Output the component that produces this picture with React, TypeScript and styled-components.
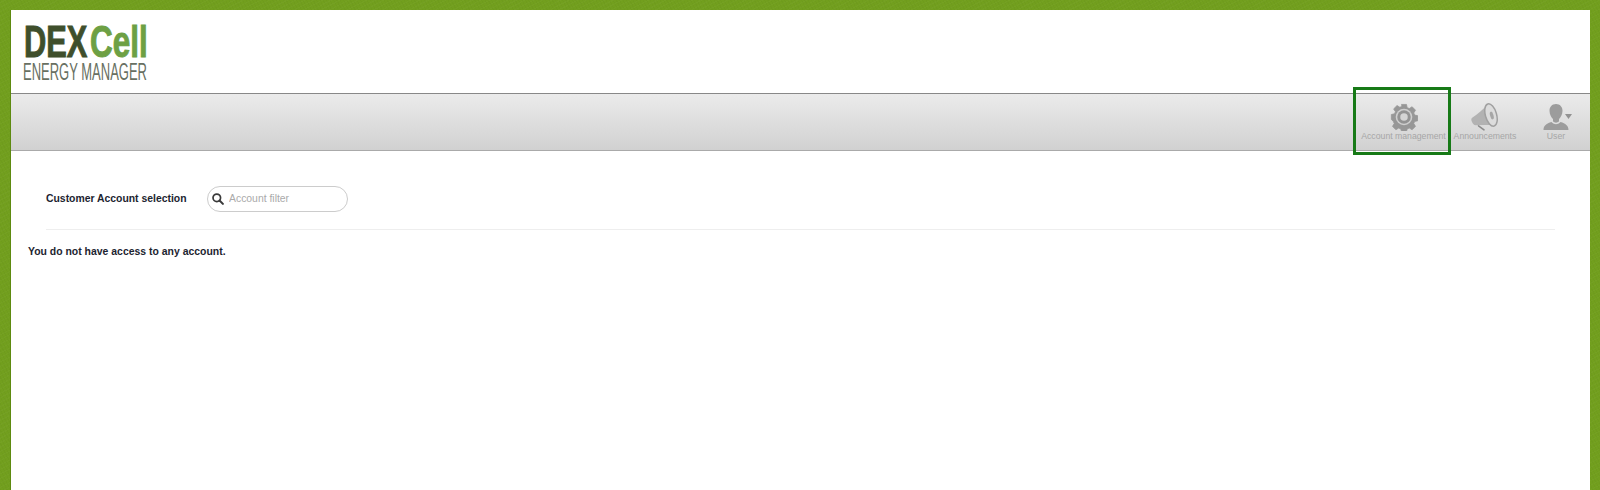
import React from "react";
import styled, { createGlobalStyle } from "styled-components";

const GlobalStyle = createGlobalStyle`
  html, body {
    margin: 0;
    padding: 0;
    height: 100%;
    overflow: hidden;
    background-color: #729f1e;
    background-image:
      repeating-linear-gradient(63deg, rgba(0, 0, 0, 0.025) 0 1px, transparent 1px 3px),
      repeating-linear-gradient(-27deg, rgba(255, 255, 255, 0.025) 0 1px, transparent 1px 4px);
    font-family: "Liberation Sans", Arial, sans-serif;
  }
`;

function GearIcon() {
  return (
    <svg width="28" height="28" viewBox="-0.5 -0.5 29 29">
      <path
        fill="#979797"
        d="M11.400 1h5.200l.7 3.300 2.200.9 2.900-1.800 3.500 3.500-1.800 2.900.9 2.200 3.300.7v5.200l-3.300.7-.9 2.200 1.800 2.900-3.500 3.500-2.900-1.800-2.200.9-.7 2.600h-5.200l-.7-2.600-2.200-.9-2.900 1.800-3.500-3.500 1.800-2.900-.9-2.200L.9 16.600v-5.200l3.300-.7.9-2.200-1.800-2.900 3.500-3.500 2.900 1.800 2.200-.9z"
        strokeLinejoin="round"
        stroke="#979797"
        strokeWidth="0.8"
      />
      <circle cx="14" cy="14" r="8.600" fill="#cfcfcf" />
      <circle cx="14" cy="14" r="7" fill="#939393" />
      <circle cx="14" cy="14" r="3.900" fill="#d4d4d4" />
    </svg>
  );
}

function MegaphoneIcon() {
  return (
    <svg width="28" height="28" viewBox="0 0 28 28">
      <path fill="none" stroke="#8c8c8c" strokeWidth="1.600" strokeLinecap="round" d="M7.500 22.800l5.500 4" />
      <path fill="#b2b2b2" d="M16.500 1.500C12.500 6 6.500 11 1.500 14.500 0 15.500 0 17 1 19c.9 1.800 2 3.100 3.500 3.300 6.500-.2 13-.3 19-.3z" />
      <ellipse cx="20" cy="12" rx="5.600" ry="11.500" transform="rotate(-16 20 12)" fill="#dcdcdc" stroke="#a0a0a0" strokeWidth="1.500" />
      <ellipse cx="20.800" cy="12.500" rx="1.700" ry="4" transform="rotate(-16 20.800 12.500)" fill="#a6a6a6" />
    </svg>
  );
}

function UserIcon() {
  return (
    <svg width="32" height="28" viewBox="-3 0 32 28">
      <path fill="#9c9c9c" d="M.5 27c0-4.500 3-6.500 8-8 1.500 1.500 3 2.200 4.500 2.200s3-.7 4.500-2.200c5 1.500 8 3.500 8 8z" />
      <path fill="#9c9c9c" d="M13 1c4 0 6.500 2.800 6.500 6.800 0 3.700-2 7-3.500 8.200v2.300c-1 1-2 1.400-3 1.400s-2-.4-3-1.400V16c-1.500-1.200-3.500-4.500-3.500-8.200C6.500 3.800 9 1 13 1z" />
      <path fill="#929292" d="M22 11h7l-3.500 5z" />
    </svg>
  );
}

function SearchIcon() {
  return (
    <svg width="12" height="12" viewBox="0 0 14 14">
      <circle cx="5.600" cy="5.600" r="4.400" fill="none" stroke="#3a3a3a" strokeWidth="2" />
      <path d="M8.800 8.800l3.900 3.900" stroke="#3a3a3a" strokeWidth="2.400" strokeLinecap="round" />
    </svg>
  );
}

export default function App() {
  return (
    <>
      <GlobalStyle />
      <Frame>
        <Header>
          <Logo>
            <LogoTop>
              <LogoWord $color="#3f4f2c" $scale={0.7} $trim={24.5}>DEX</LogoWord>
              <LogoWord $color="#6da044" $scale={0.715} $trim={23}>Cell</LogoWord>
            </LogoTop>
            <LogoSub>ENERGY MANAGER</LogoSub>
          </Logo>
        </Header>
        <Toolbar>
          <NavItem $active $width={89}>
            <GearIcon />
            <NavLabel>Account management</NavLabel>
          </NavItem>
          <NavItem $width={74}>
            <MegaphoneIcon />
            <NavLabel>Announcements</NavLabel>
          </NavItem>
          <NavItem $width={68}>
            <UserIcon />
            <NavLabel>User</NavLabel>
          </NavItem>
        </Toolbar>
        <Content>
          <FilterRow>
            <FilterLabel>Customer Account selection</FilterLabel>
            <FilterBox>
              <SearchIcon />
              <FilterInput placeholder="Account filter" />
            </FilterBox>
          </FilterRow>
          <Message>You do not have access to any account.</Message>
        </Content>
      </Frame>
    </>
  );
}

const Frame = styled.div`
  box-sizing: border-box;
  height: 480px;
  margin: 10px 10px 0 11px;
  background: #fff;
  overflow: hidden;
  box-shadow: -1px 0 0 #5d8a10;
`;

const Header = styled.div`
  height: 83px;
  padding: 13px 0 0 13px;
  box-sizing: border-box;
  overflow: hidden;
`;

const Logo = styled.div`
  display: flex;
  flex-direction: column;
  width: 130px;
`;

const LogoTop = styled.div`
  display: flex;
  height: 37px;
  align-items: flex-end;
`;

const LogoWord = styled.span<{ $color: string; $scale: number; $trim: number }>`
  display: inline-block;
  font-size: 44px;
  line-height: 37px;
  font-weight: 700;
  color: ${({ $color }) => $color};
  -webkit-text-stroke: 1px ${({ $color }) => $color};
  transform: scaleX(${({ $scale }) => $scale});
  transform-origin: left center;
  margin-right: -${({ $trim }) => $trim}px;
`;

const LogoSub = styled.span`
  display: block;
  margin: 2px 0 0 -1px;
  font-size: 23px;
  line-height: 20px;
  color: #687062;
  white-space: nowrap;
  transform: scaleX(0.565);
  transform-origin: left center;
  width: 0;
`;

const Toolbar = styled.div`
  box-sizing: border-box;
  height: 58px;
  border-top: 1px solid #888;
  border-bottom: 1px solid #aaa;
  background: linear-gradient(to bottom, #ebebeb, #d1d1d1);
  display: flex;
  justify-content: flex-end;
`;

const NavItem = styled.div<{ $active?: boolean; $width: number }>`
  position: relative;
  box-sizing: border-box;
  width: ${({ $width }) => $width}px;
  display: flex;
  flex-direction: column;
  align-items: center;
  padding-top: 9px;

  ${({ $active }) =>
    $active &&
    `
    &::after {
      content: "";
      position: absolute;
      left: -6px;
      right: -3px;
      top: -7px;
      bottom: -5px;
      border: 3px solid #177a17;
    }
  `}
`;

const NavLabel = styled.span`
  font-size: 8.700px;
  line-height: 11px;
  color: #a6a6a6;
  white-space: nowrap;
`;

const Content = styled.div`
  padding: 0 35px 0 17px;
`;

const FilterRow = styled.div`
  display: flex;
  align-items: center;
  height: 79px;
  margin-left: 18px;
  padding-top: 17px;
  border-bottom: 1px solid #eee;
  box-sizing: border-box;
`;

const FilterLabel = styled.label`
  width: 161px;
  font-size: 10.400px;
  font-weight: 700;
  color: #1c2430;
`;

const FilterBox = styled.div`
  box-sizing: border-box;
  width: 141px;
  height: 26px;
  display: flex;
  align-items: center;
  gap: 5px;
  padding-left: 4px;
  border: 1px solid #ccc;
  border-radius: 13px;
  background: #fff;
`;

const FilterInput = styled.input`
  border: none;
  outline: none;
  background: transparent;
  width: 110px;
  padding: 0;
  font-family: "Liberation Sans", Arial, sans-serif;
  font-size: 10.400px;
  color: #333;

  &::placeholder {
    color: #aaa;
    opacity: 1;
  }
`;

const Message = styled.p`
  margin: 15px 0 0;
  font-size: 10.450px;
  line-height: 13px;
  font-weight: 700;
  color: #1c2430;
`;
